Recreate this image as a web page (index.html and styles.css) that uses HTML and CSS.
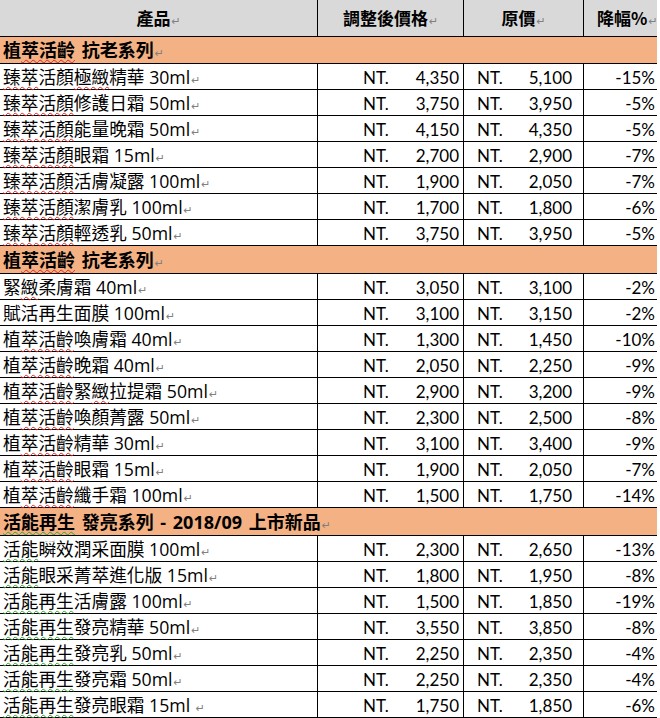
FILE: index.html
```html
<!DOCTYPE html>
<html lang="zh-Hant">
<head>
<meta charset="utf-8">
<title>價格表</title>
<link rel="stylesheet" href="styles.css">
</head>
<body>
<div class="sheet">
  <div class="row head">
    <div class="cell c1 hc"><span>產品<span class="m">↵</span></span></div>
    <div class="cell c2 hc"><span>調整後價格<span class="m">↵</span></span></div>
    <div class="cell c3 hc"><span>原價<span class="m">↵</span></span></div>
    <div class="cell c4 hc hc4"><span>降幅%<span class="m">↵</span></span></div>
  </div>

  <div class="row group"><div class="cell gc"><span>植<span class="sr">萃活齡</span> 抗老系列<span class="m">↵</span></span></div></div>

  <div class="row"><div class="cell c1 pn"><span><span class="sr">臻萃</span>活顏<span class="sr">極緻</span>精華 30ml<span class="m">↵</span></span></div><div class="cell c2 pr"><span>NT.</span><span>4,350</span></div><div class="cell c3 pr pr3"><span>NT.</span><span>5,100</span></div><div class="cell c4 pc">-15%</div></div>
  <div class="row"><div class="cell c1 pn"><span><span class="sr">臻萃活顏</span>修護日霜 50ml<span class="m">↵</span></span></div><div class="cell c2 pr"><span>NT.</span><span>3,750</span></div><div class="cell c3 pr pr3"><span>NT.</span><span>3,950</span></div><div class="cell c4 pc">-5%</div></div>
  <div class="row"><div class="cell c1 pn"><span><span class="sr">臻萃活顏</span>能量晚霜 50ml<span class="m">↵</span></span></div><div class="cell c2 pr"><span>NT.</span><span>4,150</span></div><div class="cell c3 pr pr3"><span>NT.</span><span>4,350</span></div><div class="cell c4 pc">-5%</div></div>
  <div class="row"><div class="cell c1 pn"><span><span class="sr">臻萃活顏</span>眼霜 15ml<span class="m">↵</span></span></div><div class="cell c2 pr"><span>NT.</span><span>2,700</span></div><div class="cell c3 pr pr3"><span>NT.</span><span>2,900</span></div><div class="cell c4 pc">-7%</div></div>
  <div class="row"><div class="cell c1 pn"><span><span class="sr">臻萃活顏</span>活膚凝露 100ml<span class="m">↵</span></span></div><div class="cell c2 pr"><span>NT.</span><span>1,900</span></div><div class="cell c3 pr pr3"><span>NT.</span><span>2,050</span></div><div class="cell c4 pc">-7%</div></div>
  <div class="row"><div class="cell c1 pn"><span><span class="sr">臻萃活顏</span>潔膚乳 100ml<span class="m">↵</span></span></div><div class="cell c2 pr"><span>NT.</span><span>1,700</span></div><div class="cell c3 pr pr3"><span>NT.</span><span>1,800</span></div><div class="cell c4 pc">-6%</div></div>
  <div class="row"><div class="cell c1 pn"><span><span class="sr">臻萃活顏</span>輕透乳 50ml<span class="m">↵</span></span></div><div class="cell c2 pr"><span>NT.</span><span>3,750</span></div><div class="cell c3 pr pr3"><span>NT.</span><span>3,950</span></div><div class="cell c4 pc">-5%</div></div>

  <div class="row group tall"><div class="cell gc"><span>植<span class="sr">萃活齡</span> 抗老系列<span class="m">↵</span></span></div></div>

  <div class="row"><div class="cell c1 pn"><span>緊<span class="sr">緻</span>柔膚霜 40ml<span class="m">↵</span></span></div><div class="cell c2 pr"><span>NT.</span><span>3,050</span></div><div class="cell c3 pr pr3"><span>NT.</span><span>3,100</span></div><div class="cell c4 pc">-2%</div></div>
  <div class="row"><div class="cell c1 pn"><span>賦活再生面膜 100ml<span class="m">↵</span></span></div><div class="cell c2 pr"><span>NT.</span><span>3,100</span></div><div class="cell c3 pr pr3"><span>NT.</span><span>3,150</span></div><div class="cell c4 pc">-2%</div></div>
  <div class="row"><div class="cell c1 pn"><span>植<span class="sr">萃活齡</span>喚膚霜 40ml<span class="m">↵</span></span></div><div class="cell c2 pr"><span>NT.</span><span>1,300</span></div><div class="cell c3 pr pr3"><span>NT.</span><span>1,450</span></div><div class="cell c4 pc">-10%</div></div>
  <div class="row"><div class="cell c1 pn"><span>植<span class="sr">萃活齡</span>晚霜 40ml<span class="m">↵</span></span></div><div class="cell c2 pr"><span>NT.</span><span>2,050</span></div><div class="cell c3 pr pr3"><span>NT.</span><span>2,250</span></div><div class="cell c4 pc">-9%</div></div>
  <div class="row"><div class="cell c1 pn"><span>植<span class="sr">萃活齡</span>緊<span class="sr">緻</span>拉提霜 50ml<span class="m">↵</span></span></div><div class="cell c2 pr"><span>NT.</span><span>2,900</span></div><div class="cell c3 pr pr3"><span>NT.</span><span>3,200</span></div><div class="cell c4 pc">-9%</div></div>
  <div class="row"><div class="cell c1 pn"><span>植<span class="sr">萃活齡</span>喚顏菁露 50ml<span class="m">↵</span></span></div><div class="cell c2 pr"><span>NT.</span><span>2,300</span></div><div class="cell c3 pr pr3"><span>NT.</span><span>2,500</span></div><div class="cell c4 pc">-8%</div></div>
  <div class="row"><div class="cell c1 pn"><span>植<span class="sr">萃活齡</span>精華 30ml<span class="m">↵</span></span></div><div class="cell c2 pr"><span>NT.</span><span>3,100</span></div><div class="cell c3 pr pr3"><span>NT.</span><span>3,400</span></div><div class="cell c4 pc">-9%</div></div>
  <div class="row"><div class="cell c1 pn"><span>植<span class="sr">萃活齡</span>眼霜 15ml<span class="m">↵</span></span></div><div class="cell c2 pr"><span>NT.</span><span>1,900</span></div><div class="cell c3 pr pr3"><span>NT.</span><span>2,050</span></div><div class="cell c4 pc">-7%</div></div>
  <div class="row"><div class="cell c1 pn"><span>植<span class="sr">萃活齡</span>纖手霜 100ml<span class="m">↵</span></span></div><div class="cell c2 pr"><span>NT.</span><span>1,500</span></div><div class="cell c3 pr pr3"><span>NT.</span><span>1,750</span></div><div class="cell c4 pc">-14%</div></div>

  <div class="row group tall"><div class="cell gc"><span><span class="sg">活能再生</span> 發亮系列 - 2018/09 上市新品<span class="m">↵</span></span></div></div>

  <div class="row"><div class="cell c1 pn"><span><span class="sg">活能</span>瞬效潤采面膜 100ml<span class="m">↵</span></span></div><div class="cell c2 pr"><span>NT.</span><span>2,300</span></div><div class="cell c3 pr pr3"><span>NT.</span><span>2,650</span></div><div class="cell c4 pc">-13%</div></div>
  <div class="row"><div class="cell c1 pn"><span><span class="sg">活能</span>眼采菁萃進化版 15ml<span class="m">↵</span></span></div><div class="cell c2 pr"><span>NT.</span><span>1,800</span></div><div class="cell c3 pr pr3"><span>NT.</span><span>1,950</span></div><div class="cell c4 pc">-8%</div></div>
  <div class="row"><div class="cell c1 pn"><span><span class="sg">活能再生</span>活膚露 100ml<span class="m">↵</span></span></div><div class="cell c2 pr"><span>NT.</span><span>1,500</span></div><div class="cell c3 pr pr3"><span>NT.</span><span>1,850</span></div><div class="cell c4 pc">-19%</div></div>
  <div class="row"><div class="cell c1 pn"><span><span class="sg">活能再生</span>發亮精華 50ml<span class="m">↵</span></span></div><div class="cell c2 pr"><span>NT.</span><span>3,550</span></div><div class="cell c3 pr pr3"><span>NT.</span><span>3,850</span></div><div class="cell c4 pc">-8%</div></div>
  <div class="row"><div class="cell c1 pn"><span><span class="sg">活能再生</span>發亮乳 50ml<span class="m">↵</span></span></div><div class="cell c2 pr"><span>NT.</span><span>2,250</span></div><div class="cell c3 pr pr3"><span>NT.</span><span>2,350</span></div><div class="cell c4 pc">-4%</div></div>
  <div class="row"><div class="cell c1 pn"><span><span class="sg">活能再生</span>發亮霜 50ml<span class="m">↵</span></span></div><div class="cell c2 pr"><span>NT.</span><span>2,250</span></div><div class="cell c3 pr pr3"><span>NT.</span><span>2,350</span></div><div class="cell c4 pc">-4%</div></div>
  <div class="row"><div class="cell c1 pn"><span><span class="sg">活能再生</span>發亮眼霜 15ml <span class="m">↵</span></span></div><div class="cell c2 pr"><span>NT.</span><span>1,750</span></div><div class="cell c3 pr pr3"><span>NT.</span><span>1,850</span></div><div class="cell c4 pc">-6%</div></div>
</div>
</body>
</html>
```

FILE: styles.css
```css
html, body {
  margin: 0;
  padding: 0;
  background: #ffffff;
}

.sheet {
  width: 657px;
  color: #000000;
  font-family: "Noto Sans CJK TC", "Noto Sans", sans-serif;
  overflow: hidden;
}

.row {
  display: flex;
  height: 26px;
  box-sizing: border-box;
  border-bottom: 1px solid #000000;
}

.head {
  height: 37px;
  background: #d9d9d9;
}

.group {
  height: 27px;
  background: #f4b183;
}

.group.tall {
  height: 28px;
}

.cell {
  box-sizing: border-box;
  display: flex;
  align-items: center;
  white-space: nowrap;
  min-width: 0;
  line-height: 1.2;
}

.c1 { width: 317px; }
.c2 { width: 146px; border-left: 1px solid #000000; }
.c3 { width: 120px; border-left: 1px solid #000000; }
.c4 { width: 74px; border-left: 1px solid #000000; }

.hc {
  justify-content: center;
  font-weight: bold;
  font-size: 17px;
  padding-top: 1px;
}

.hc4 {
  justify-content: flex-start;
  padding-left: 13px;
  overflow: visible;
}

.gc {
  width: 657px;
  padding-left: 3px;
  font-family: "Open Sans", "Noto Sans CJK TC", sans-serif;
  font-weight: bold;
  font-size: 18px;
  word-spacing: 2px;
  padding-top: 2px;
}

.pn {
  padding-left: 3px;
  font-family: "Open Sans", "Noto Sans CJK TC", sans-serif;
  font-size: 17.7px;
  padding-top: 3px;
}

.pr {
  justify-content: space-between;
  padding-left: 45px;
  padding-right: 4px;
  font-family: "Lato", "Liberation Sans", sans-serif;
  font-size: 17px;
  padding-top: 3px;
}

.pr3 {
  padding-left: 13px;
  padding-right: 11px;
}

.pc {
  justify-content: flex-end;
  padding-right: 2px;
  font-family: "Lato", "Liberation Sans", sans-serif;
  font-size: 17px;
  padding-top: 3px;
}

.m {
  font-family: "DejaVu Sans", sans-serif;
  font-size: 11px;
  font-weight: normal;
  color: #808080;
  margin-left: 1px;
}

.sr {
  text-decoration: underline wavy #e02020;
  text-decoration-thickness: 1px;
  text-underline-offset: 2px;
}

.sg {
  text-decoration: underline wavy #30a030;
  text-decoration-thickness: 1px;
  text-underline-offset: 2px;
}
```
